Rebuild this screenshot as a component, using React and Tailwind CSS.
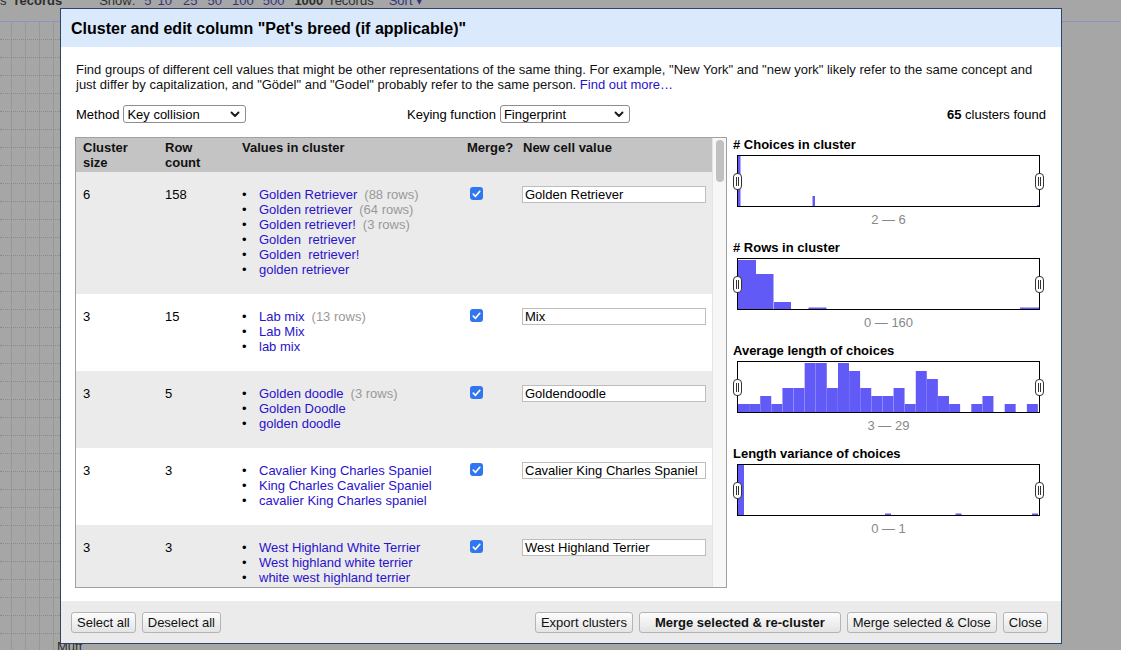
import React from "react";

const ROWS = [
  {
    size: 6,
    count: 158,
    values: [
      ["Golden Retriever", 88],
      ["Golden retriever", 64],
      ["Golden retriever!", 3],
      ["Golden  retriever"],
      ["Golden  retriever!"],
      ["golden retriever"],
    ],
    value: "Golden Retriever",
  },
  { size: 3, count: 15, values: [["Lab mix", 13], ["Lab Mix"], ["lab mix"]], value: "Mix" },
  { size: 3, count: 5, values: [["Golden doodle", 3], ["Golden Doodle"], ["golden doodle"]], value: "Goldendoodle" },
  {
    size: 3,
    count: 3,
    values: [["Cavalier King Charles Spaniel"], ["King Charles Cavalier Spaniel"], ["cavalier King Charles spaniel"]],
    value: "Cavalier King Charles Spaniel",
  },
  {
    size: 3,
    count: 3,
    values: [["West Highland White Terrier"], ["West highland white terrier"], ["white west highland terrier"]],
    value: "West Highland Terrier",
  },
];

const AVG_HEIGHTS = [8, 8, 16, 8, 24, 24, 49, 49, 24, 49, 41, 24, 16, 16, 24, 8, 41, 33, 16, 8, 0, 8, 16, 0, 8, 0, 8];

const HISTS = [
  {
    title: "# Choices in cluster",
    label: "2 — 6",
    bars: [
      [0, 2.5, 50],
      [74.5, 2.5, 10],
      [299, 2, 1],
    ],
  },
  {
    title: "# Rows in cluster",
    label: "0 — 160",
    bars: [
      [0, 18, 49],
      [18, 17.5, 35],
      [36, 17, 7],
      [70.5, 18, 1.5],
      [282, 19, 1.5],
    ],
  },
  {
    title: "Average length of choices",
    label: "3 — 29",
    bars: AVG_HEIGHTS.map((h, i) => [i * 11.111, 11.0, h]).filter((b) => b[2] > 0),
  },
  {
    title: "Length variance of choices",
    label: "0 — 1",
    bars: [
      [0, 6, 50],
      [147, 6, 1.5],
      [217.5, 6, 1.5],
      [294, 6, 1.5],
    ],
  },
];

function Chevron() {
  return (
    <svg width="10" height="7" viewBox="0 0 10 7" className="block">
      <path d="M1.5 1.5 L5 5 L8.5 1.5" fill="none" stroke="#1a1a1a" strokeWidth="1.9" strokeLinecap="round" strokeLinejoin="round" />
    </svg>
  );
}

function Checkbox() {
  return (
    <div className="flex h-[13px] w-[13px] items-center justify-center rounded-[3px] bg-[#2f76f0]">
      <svg width="9" height="8" viewBox="0 0 9 8" className="block">
        <path d="M1.3 4.2 L3.5 6.3 L7.8 1.3" fill="none" stroke="#fff" strokeWidth="1.7" strokeLinecap="round" strokeLinejoin="round" />
      </svg>
    </div>
  );
}

function Handle({ className }) {
  return (
    <svg width="9" height="17" viewBox="0 0 9 17" className={className}>
      <rect x="0.5" y="0.5" width="8" height="16" rx="3.5" fill="#fff" stroke="#333" />
      <line x1="3.5" y1="4" x2="3.5" y2="13" stroke="#333" />
      <line x1="5.5" y1="4" x2="5.5" y2="13" stroke="#333" />
    </svg>
  );
}

function Histogram({ title, label, bars }) {
  return (
    <div className="mb-[13px]">
      <div className="font-bold leading-[15px] text-black">{title}</div>
      <div className="relative ml-[4px] mt-[3px] h-[52px] w-[303px] border border-black bg-white">
        <svg width="301" height="50" viewBox="0 0 301 50" className="block">
          {bars.map(([x, w, h], i) => (
            <rect key={i} x={x} y={50 - h} width={w} height={h} fill="#615af6" />
          ))}
        </svg>
        <Handle className="absolute left-[-5px] top-[17px]" />
        <Handle className="absolute right-[-5px] top-[17px]" />
      </div>
      <div className="ml-[4px] mt-[5px] w-[303px] text-center leading-[15px] text-[#888]">{label}</div>
    </div>
  );
}

function Row({ row, shaded }) {
  return (
    <div className={shaded ? "flex shrink-0 bg-[#ebebeb] pb-[17px] pt-[15px]" : "flex shrink-0 bg-white pb-[17px] pt-[15px]"}>
      <div className="w-[83px] shrink-0 pl-[7px]">{row.size}</div>
      <div className="w-[77px] shrink-0 pl-[6px]">{row.count}</div>
      <div className="w-[225px] shrink-0 pl-[6px]">
        {row.values.map(([t, n], i) => (
          <div key={i} className="flex">
            <span className="w-[17px] shrink-0">•</span>
            <span className="whitespace-pre text-[#2a12cc]">{t}</span>
            {n ? <span className="ml-[7px] text-[#999]">({n} rows)</span> : null}
          </div>
        ))}
      </div>
      <div className="w-[56px] shrink-0 pl-[9px]">
        <Checkbox />
      </div>
      <div className="w-[195px] shrink-0 pl-[5px]">
        <div className="mt-[-1px] h-[17px] w-[184px] overflow-hidden whitespace-nowrap border border-[#bdbdbd] bg-white pl-[2px] leading-[15px] text-black">
          {row.value}
        </div>
      </div>
    </div>
  );
}

function Button({ children, bold }) {
  return (
    <div
      className={
        bold
          ? "flex h-[21px] items-center rounded-[3px] border border-[#b4b4b4] bg-gradient-to-b from-[#fdfdfd] to-[#e4e4e4] px-[15px] font-bold text-[#111]"
          : "flex h-[21px] items-center rounded-[3px] border border-[#b4b4b4] bg-gradient-to-b from-[#fdfdfd] to-[#e4e4e4] px-[5px] text-[#111]"
      }
    >
      {children}
    </div>
  );
}

function Background() {
  const lines = Array.from({ length: 35 });
  return (
    <>
      <div className="absolute left-0 top-[-7px] flex whitespace-pre text-[13px] leading-[15px] text-[#2e2e2e]">
        <span>s</span>
        <span className="ml-[8px] font-bold">records</span>
        <span className="ml-[37px]">Show:</span>
        <span className="ml-[9px] text-[#35357e]">5</span>
        <span className="ml-[6px] text-[#35357e]">10</span>
        <span className="ml-[11px] text-[#35357e]">25</span>
        <span className="ml-[10px] text-[#35357e]">50</span>
        <span className="ml-[10px] text-[#35357e]">100</span>
        <span className="ml-[9px] text-[#35357e]">500</span>
        <span className="ml-[10px] font-bold">1000</span>
        <span className="ml-[7px]">records</span>
        <span className="ml-[15px] text-[#35357e]">Sort ▾</span>
      </div>
      <div className="absolute left-0 right-0 top-[21px] h-px bg-[#8b93c0]" />
      <div className="absolute left-0 top-[22px] flex h-[640px]">
        <div className="w-[12px] border-r border-[#989898]" />
        <div className="w-[14px] border-r border-[#989898]" />
        <div className="w-[14px] border-r border-[#989898]" />
        <div className="w-[14px] border-r border-[#989898]" />
      </div>
      <div className="absolute left-0 top-[22px] w-[60px]">
        {lines.map((_, i) => (
          <div key={i} className="h-[18px] border-b border-dotted border-[#888]" />
        ))}
      </div>
      <div className="absolute left-[57px] top-[639px] text-[13px] leading-[15px] text-[#2e2e2e]">Mutt</div>
    </>
  );
}

export default function App() {
  return (
    <div className="relative h-[650px] w-[1121px] overflow-hidden bg-[#a6a6a6] font-['Liberation_Sans',Arial,sans-serif] text-[13px] leading-[15px] text-black">
      <Background />
      <div className="absolute left-[60px] top-[8px] flex h-[636px] w-[1002px] flex-col border border-[#2d4668] bg-white">
        <div className="flex h-[38px] shrink-0 items-center bg-[#dbe9fc] pl-[10px] pt-[2px] text-[16px] font-bold leading-[18px] text-black">
          Cluster and edit column "Pet's breed (if applicable)"
        </div>
        <div className="flex min-h-0 flex-1 flex-col pl-[15px] pr-[15px] pt-[15px]">
          <div className="text-[#111]">
            Find groups of different cell values that might be other representations of the same thing. For example, "New York" and "new york" likely refer to the same concept and just differ by capitalization, and "Gödel" and "Godel" probably refer to the same person.{" "}
            <span className="text-[#2a12cc]">Find out more…</span>
          </div>
          <div className="mt-[13px] flex h-[18px] items-center">
            <div className="flex w-[331px] shrink-0 items-center">
              <span>Method</span>
              <div className="ml-[4px] flex h-[18px] w-[123px] items-center justify-between rounded-[3px] border border-[#8d8d8d] bg-white pl-[3px] pr-[5px]">
                <span>Key collision</span>
                <Chevron />
              </div>
            </div>
            <div className="flex items-center">
              <span>Keying function</span>
              <div className="ml-[4px] flex h-[18px] w-[130px] items-center justify-between rounded-[3px] border border-[#8d8d8d] bg-white pl-[3px] pr-[5px]">
                <span>Fingerprint</span>
                <Chevron />
              </div>
            </div>
            <div className="flex-1 text-right">
              <span className="font-bold">65</span> clusters found
            </div>
          </div>
          <div className="mt-[14px] flex">
            <div className="ml-[-1px] flex h-[451px] w-[652px] shrink-0 border border-[#a0a0a0]">
              <div className="flex w-[636px] shrink-0 flex-col overflow-hidden">
                <div className="flex shrink-0 bg-[#c4c4c4] py-[2px] font-bold leading-[15px] text-[#111]">
                  <div className="w-[83px] shrink-0 pl-[7px]">
                    Cluster
                    <br />
                    size
                  </div>
                  <div className="w-[77px] shrink-0 pl-[6px]">
                    Row
                    <br />
                    count
                  </div>
                  <div className="w-[225px] shrink-0 pl-[6px]">Values in cluster</div>
                  <div className="w-[56px] shrink-0 pl-[6px]">Merge?</div>
                  <div className="w-[195px] shrink-0 pl-[6px]">New cell value</div>
                </div>
                {ROWS.map((r, i) => (
                  <Row key={i} row={r} shaded={i % 2 === 0} />
                ))}
              </div>
              <div className="w-[14px] shrink-0 border-l border-[#e4e4e4] bg-[#f7f7f7] pt-[2px]">
                <div className="mx-auto h-[42px] w-[8px] rounded-full bg-[#c1c1c1]" />
              </div>
            </div>
            <div className="ml-[6px] flex-1">
              {HISTS.map((h, i) => (
                <Histogram key={i} {...h} />
              ))}
            </div>
          </div>
        </div>
        <div className="flex h-[42px] shrink-0 items-start bg-[#ebebeb] pl-[10px] pr-[13px] pt-[11px]">
          <div className="flex gap-[6px]">
            <Button>Select all</Button>
            <Button>Deselect all</Button>
          </div>
          <div className="ml-auto flex gap-[6px]">
            <Button>Export clusters</Button>
            <Button bold>Merge selected &amp; re-cluster</Button>
            <Button>Merge selected &amp; Close</Button>
            <Button>Close</Button>
          </div>
        </div>
      </div>
    </div>
  );
}
